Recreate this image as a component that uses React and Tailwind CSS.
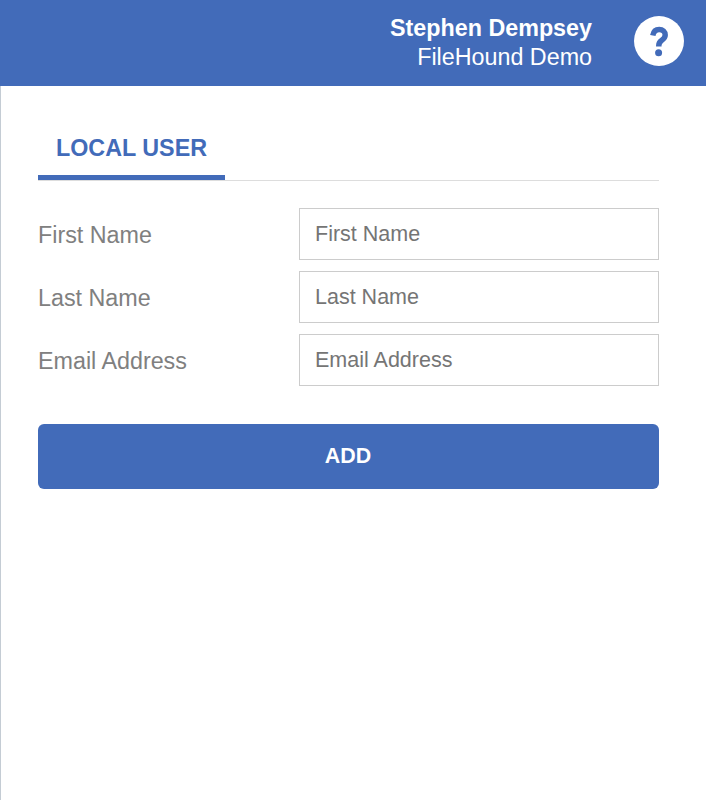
const fields = ["First Name", "Last Name", "Email Address"];

function HelpIcon() {
  return (
    <svg viewBox="0 0 50 50" className="mb-[5px] ml-[42px] size-[50px]">
      <circle cx="25" cy="25" r="25" fill="#ffffff" />
      <path
        d="M18.8 19.5C19.5 15.5 22 13.5 25.2 13.5C28.7 13.5 31.2 15.8 31.2 19C31.2 21.5 29.8 22.8 27.8 24.2C25.8 25.6 24.8 26.8 24.8 29.5V30.5"
        fill="none"
        stroke="#426bb9"
        strokeWidth="5.5"
      />
      <circle cx="24.6" cy="36.8" r="3.5" fill="#426bb9" />
    </svg>
  );
}

export default function App() {
  return (
    <div className="flex h-[800px] flex-col bg-white font-['Liberation_Sans',Arial,sans-serif]">
      <header className="flex h-[86px] items-center justify-end bg-[#426bb9] pr-[22px] text-white">
        <div className="flex flex-col items-end text-[23.3px] leading-[29px]">
          <span className="font-bold">Stephen Dempsey</span>
          <span>FileHound Demo</span>
        </div>
        <HelpIcon />
      </header>

      <main className="flex-1 border-l border-[#c4ccd4] pt-[47px] pl-[37px] pr-[47px]">
        <div className="border-b border-[#dddddd]">
          <div className="w-[187px] border-b-[5px] border-[#426bb9] px-[18px] pb-[12px] text-[23.3px] leading-[30px] font-bold text-[#426bb9]">
            LOCAL USER
          </div>
        </div>

        <div className="mt-[27px] flex flex-col gap-[11px]">
          {fields.map((f) => (
            <div key={f} className="flex items-center">
              <label className="w-[261px] pt-[2px] text-[23.3px] text-[#808080]">{f}</label>
              <input
                placeholder={f}
                className="h-[52px] w-[360px] border border-[#cccccc] pr-[16px] pl-[15px] text-[21.5px] outline-none placeholder:text-[#757575]"
              />
            </div>
          ))}
        </div>

        <button className="mt-[38px] h-[65px] w-[621px] rounded-[6px] bg-[#426bb9] pr-[1px] text-[21.4px] font-bold text-white">
          ADD
        </button>
      </main>
    </div>
  );
}
